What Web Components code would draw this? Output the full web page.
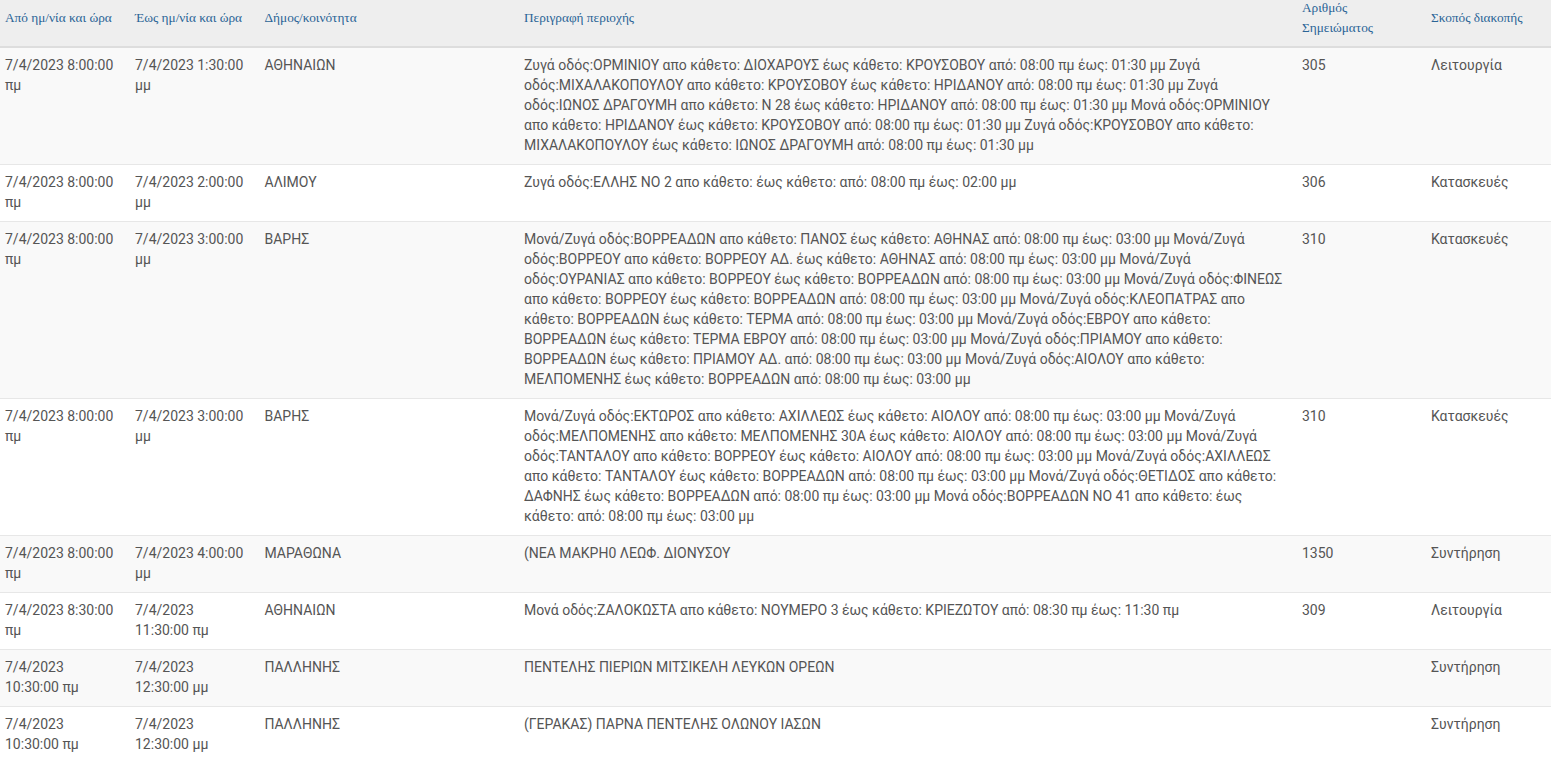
<!DOCTYPE html>
<html lang="el">
<head>
<meta charset="utf-8">
<title>Διακοπές</title>
<style>
  html, body { margin: 0; background: #fff; }
  body { font: 14px/20px Roboto, "Noto Sans", sans-serif; color: #555; }
</style>
</head>
<body>
<outage-table>
  <outage-head>
    <span>Από ημ/νία και ώρα</span>
    <span>Έως ημ/νία και ώρα</span>
    <span>Δήμος/κοινότητα</span>
    <span>Περιγραφή περιοχής</span>
    <span class="narrow">Αριθμός Σημειώματος</span>
    <span>Σκοπός διακοπής</span>
  </outage-head>
  <outage-row from="7/4/2023 8:00:00 πμ" to="7/4/2023 1:30:00 μμ" area="ΑΘΗΝΑΙΩΝ" num="305" purpose="Λειτουργία">Ζυγά οδός:ΟΡΜΙΝΙΟΥ απο κάθετο: ΔΙΟΧΑΡΟΥΣ έως κάθετο: ΚΡΟΥΣΟΒΟΥ από: 08:00 πμ έως: 01:30 μμ Ζυγά οδός:ΜΙΧΑΛΑΚΟΠΟΥΛΟΥ απο κάθετο: ΚΡΟΥΣΟΒΟΥ έως κάθετο: ΗΡΙΔΑΝΟΥ από: 08:00 πμ έως: 01:30 μμ Ζυγά οδός:ΙΩΝΟΣ ΔΡΑΓΟΥΜΗ απο κάθετο: Ν 28 έως κάθετο: ΗΡΙΔΑΝΟΥ από: 08:00 πμ έως: 01:30 μμ Μονά οδός:ΟΡΜΙΝΙΟΥ απο κάθετο: ΗΡΙΔΑΝΟΥ έως κάθετο: ΚΡΟΥΣΟΒΟΥ από: 08:00 πμ έως: 01:30 μμ Ζυγά οδός:ΚΡΟΥΣΟΒΟΥ απο κάθετο: ΜΙΧΑΛΑΚΟΠΟΥΛΟΥ έως κάθετο: ΙΩΝΟΣ ΔΡΑΓΟΥΜΗ από: 08:00 πμ έως: 01:30 μμ</outage-row>
  <outage-row from="7/4/2023 8:00:00 πμ" to="7/4/2023 2:00:00 μμ" area="ΑΛΙΜΟΥ" num="306" purpose="Κατασκευές">Ζυγά οδός:ΕΛΛΗΣ ΝΟ 2 απο κάθετο: έως κάθετο: από: 08:00 πμ έως: 02:00 μμ</outage-row>
  <outage-row from="7/4/2023 8:00:00 πμ" to="7/4/2023 3:00:00 μμ" area="ΒΑΡΗΣ" num="310" purpose="Κατασκευές">Μονά/Ζυγά οδός:ΒΟΡΡΕΑΔΩΝ απο κάθετο: ΠΑΝΟΣ έως κάθετο: ΑΘΗΝΑΣ από: 08:00 πμ έως: 03:00 μμ Μονά/Ζυγά οδός:ΒΟΡΡΕΟΥ απο κάθετο: ΒΟΡΡΕΟΥ ΑΔ. έως κάθετο: ΑΘΗΝΑΣ από: 08:00 πμ έως: 03:00 μμ Μονά/Ζυγά οδός:ΟΥΡΑΝΙΑΣ απο κάθετο: ΒΟΡΡΕΟΥ έως κάθετο: ΒΟΡΡΕΑΔΩΝ από: 08:00 πμ έως: 03:00 μμ Μονά/Ζυγά οδός:ΦΙΝΕΩΣ απο κάθετο: ΒΟΡΡΕΟΥ έως κάθετο: ΒΟΡΡΕΑΔΩΝ από: 08:00 πμ έως: 03:00 μμ Μονά/Ζυγά οδός:ΚΛΕΟΠΑΤΡΑΣ απο κάθετο: ΒΟΡΡΕΑΔΩΝ έως κάθετο: ΤΕΡΜΑ από: 08:00 πμ έως: 03:00 μμ Μονά/Ζυγά οδός:ΕΒΡΟΥ απο κάθετο: ΒΟΡΡΕΑΔΩΝ έως κάθετο: ΤΕΡΜΑ ΕΒΡΟΥ από: 08:00 πμ έως: 03:00 μμ Μονά/Ζυγά οδός:ΠΡΙΑΜΟΥ απο κάθετο: ΒΟΡΡΕΑΔΩΝ έως κάθετο: ΠΡΙΑΜΟΥ ΑΔ. από: 08:00 πμ έως: 03:00 μμ Μονά/Ζυγά οδός:ΑΙΟΛΟΥ απο κάθετο: ΜΕΛΠΟΜΕΝΗΣ έως κάθετο: ΒΟΡΡΕΑΔΩΝ από: 08:00 πμ έως: 03:00 μμ</outage-row>
  <outage-row from="7/4/2023 8:00:00 πμ" to="7/4/2023 3:00:00 μμ" area="ΒΑΡΗΣ" num="310" purpose="Κατασκευές">Μονά/Ζυγά οδός:ΕΚΤΩΡΟΣ απο κάθετο: ΑΧΙΛΛΕΩΣ έως κάθετο: ΑΙΟΛΟΥ από: 08:00 πμ έως: 03:00 μμ Μονά/Ζυγά οδός:ΜΕΛΠΟΜΕΝΗΣ απο κάθετο: ΜΕΛΠΟΜΕΝΗΣ 30Α έως κάθετο: ΑΙΟΛΟΥ από: 08:00 πμ έως: 03:00 μμ Μονά/Ζυγά οδός:ΤΑΝΤΑΛΟΥ απο κάθετο: ΒΟΡΡΕΟΥ έως κάθετο: ΑΙΟΛΟΥ από: 08:00 πμ έως: 03:00 μμ Μονά/Ζυγά οδός:ΑΧΙΛΛΕΩΣ απο κάθετο: ΤΑΝΤΑΛΟΥ έως κάθετο: ΒΟΡΡΕΑΔΩΝ από: 08:00 πμ έως: 03:00 μμ Μονά/Ζυγά οδός:ΘΕΤΙΔΟΣ απο κάθετο: ΔΑΦΝΗΣ έως κάθετο: ΒΟΡΡΕΑΔΩΝ από: 08:00 πμ έως: 03:00 μμ Μονά οδός:ΒΟΡΡΕΑΔΩΝ ΝΟ 41 απο κάθετο: έως κάθετο: από: 08:00 πμ έως: 03:00 μμ</outage-row>
  <outage-row from="7/4/2023 8:00:00 πμ" to="7/4/2023 4:00:00 μμ" area="ΜΑΡΑΘΩΝΑ" num="1350" purpose="Συντήρηση">(ΝΕΑ ΜΑΚΡΗ0 ΛΕΩΦ. ΔΙΟΝΥΣΟΥ</outage-row>
  <outage-row from="7/4/2023 8:30:00 πμ" to="7/4/2023 11:30:00 πμ" area="ΑΘΗΝΑΙΩΝ" num="309" purpose="Λειτουργία">Μονά οδός:ΖΑΛΟΚΩΣΤΑ απο κάθετο: ΝΟΥΜΕΡΟ 3 έως κάθετο: ΚΡΙΕΖΩΤΟΥ από: 08:30 πμ έως: 11:30 πμ</outage-row>
  <outage-row from="7/4/2023 10:30:00 πμ" to="7/4/2023 12:30:00 μμ" area="ΠΑΛΛΗΝΗΣ" num="" purpose="Συντήρηση">ΠΕΝΤΕΛΗΣ ΠΙΕΡΙΩΝ ΜΙΤΣΙΚΕΛΗ ΛΕΥΚΩΝ ΟΡΕΩΝ</outage-row>
  <outage-row from="7/4/2023 10:30:00 πμ" to="7/4/2023 12:30:00 μμ" area="ΠΑΛΛΗΝΗΣ" num="" purpose="Συντήρηση">(ΓΕΡΑΚΑΣ) ΠΑΡΝΑ ΠΕΝΤΕΛΗΣ ΟΛΩΝΟΥ ΙΑΣΩΝ</outage-row>
</outage-table>

<script>
// column widths are shared by head and rows, so they live on one custom property
const COLUMNS = '130px 129.5px 259.5px 778px 129px 125px';

class OutageTable extends HTMLElement {
  constructor() {
    super();
    const root = this.attachShadow({mode: 'open'});
    root.innerHTML = `
      <style>
        :host { display: block; --cols: ${COLUMNS}; overflow: hidden; }
      </style>
      <slot></slot>`;
  }
}

class OutageHead extends HTMLElement {
  constructor() {
    super();
    const root = this.attachShadow({mode: 'open'});
    root.innerHTML = `
      <style>
        :host {
          display: grid;
          grid-template-columns: var(--cols);
          align-items: center;
          align-content: center;
          height: 36px;
          padding-bottom: 10px;
          background: #eee;
          border-bottom: 2px solid #ddd;
          font: 13.3px/20px "Liberation Serif", serif;
          color: #2a6496;
        }
        ::slotted(span) { display: block; padding: 0 5px; }
        ::slotted(.narrow) { padding-right: 30px; }
      </style>
      <slot></slot>`;
  }
}

const rowTemplate = document.createElement('template');
rowTemplate.innerHTML = `
  <style>
    :host {
      display: grid;
      grid-template-columns: var(--cols);
      background: #fff;
      border-top: 1px solid #e7e7e7;
    }
    :host(:nth-of-type(odd)) { background: #f9f9f9; }
    :host(.first) { border-top: 0; }
    div { padding: 7px 5px 9px; min-width: 0; }
    /* the two date columns wrap before the full date and time */
    .date { padding-right: 15px; }
  </style>
  <div id="from" class="date"></div>
  <div id="to" class="date"></div>
  <div id="area"></div>
  <div><slot></slot></div>
  <div id="num"></div>
  <div id="purpose"></div>`;

class OutageRow extends HTMLElement {
  constructor() {
    super();
    this.attachShadow({mode: 'open'}).appendChild(rowTemplate.content.cloneNode(true));
  }

  connectedCallback() {
    for (const name of ['from', 'to', 'area', 'num', 'purpose']) {
      this.shadowRoot.getElementById(name).textContent = this.getAttribute(name);
    }
  }
}

customElements.define('outage-table', OutageTable);
customElements.define('outage-head', OutageHead);
customElements.define('outage-row', OutageRow);
document.querySelector('outage-row').classList.add('first');
</script>
</body>
</html>
